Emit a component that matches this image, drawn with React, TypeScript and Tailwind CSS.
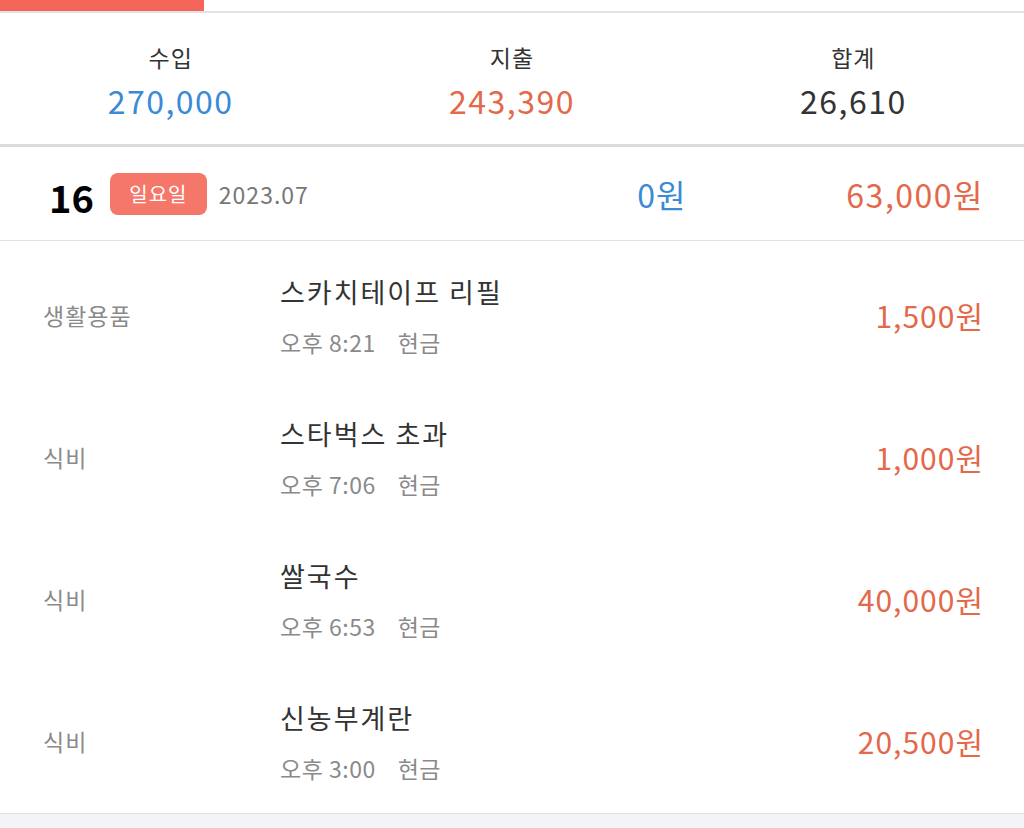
// Daily ledger view: month summary, one day header, and the day's entries.

const font = { fontFamily: '"Noto Sans CJK KR", "Noto Sans", sans-serif' };

type Entry = {
  category: string;
  title: string;
  time: string;
  method: string;
  amount: string;
};

const entries: Entry[] = [
  { category: "생활용품", title: "스카치테이프 리필", time: "오후 8:21", method: "현금", amount: "1,500원" },
  { category: "식비", title: "스타벅스 초과", time: "오후 7:06", method: "현금", amount: "1,000원" },
  { category: "식비", title: "쌀국수", time: "오후 6:53", method: "현금", amount: "40,000원" },
  { category: "식비", title: "신농부계란", time: "오후 3:00", method: "현금", amount: "20,500원" },
];

function SummaryCell({ label, value, color }: { label: string; value: string; color: string }) {
  return (
    <div className="flex flex-col items-center">
      <span className="text-[23px] leading-[30px] tracking-[1px] text-[#333]">{label}</span>
      <span className={`mt-[12px] text-[32px] leading-[32px] tracking-[1.5px] ${color}`}>{value}</span>
    </div>
  );
}

function EntryRow({ entry }: { entry: Entry }) {
  return (
    <div className="flex h-[142px] items-center pl-[43px] pr-[40px]">
      <div className="w-[237px] pb-[2px] text-[23px] tracking-[1px] text-[#8a8a8a]">{entry.category}</div>
      <div className="flex flex-1 flex-col">
        <span className="text-[27px] leading-[34px] tracking-[2px] text-[#333]">{entry.title}</span>
        <span className="mt-[18px] text-[23px] leading-[30px] tracking-[0.5px] text-[#8a8a8a]">
          {entry.time}
          <span className="ml-[22px]">{entry.method}</span>
        </span>
      </div>
      <div className="pb-[2px] text-[30px] tracking-[1px] text-[#e4684a]">{entry.amount}</div>
    </div>
  );
}

export default function App() {
  return (
    <div className="flex h-[828px] w-[1024px] flex-col bg-[#f4f4f6]" style={font}>
      <div className="bg-white">
        {/* tab indicator */}
        <div className="h-[13px] border-b-2 border-[#e3e3e3]">
          <div className="h-[11px] w-[204px] bg-[#f4665a]" />
        </div>

        {/* month totals */}
        <div className="grid grid-cols-3 border-b-[3px] border-[#dcdcdc] pt-[29px] pb-[28px]">
          <SummaryCell label="수입" value="270,000" color="text-[#3a8ad6]" />
          <SummaryCell label="지출" value="243,390" color="text-[#e4684a]" />
          <SummaryCell label="합계" value="26,610" color="text-[#333]" />
        </div>

        {/* day header */}
        <div className="flex h-[94px] items-center border-b border-[#e2e2e2] pl-[49px] pr-[40px]">
          <span className="mt-[6px] text-[38px] font-bold leading-none text-black">16</span>
          <span className="ml-[16px] flex h-[42px] w-[97px] items-center justify-center rounded-[8px] bg-[#f4776a] text-[20px] tracking-[1px] text-white">
            일요일
          </span>
          <span className="ml-[12px] mt-[2px] text-[23px] tracking-[1px] text-[#777]">2023.07</span>
          <span className="ml-auto text-[32px] tracking-[1px] text-[#3a8ad6]">0원</span>
          <span className="ml-[160px] text-[32px] tracking-[1.5px] text-[#e4684a]">63,000원</span>
        </div>

        {/* entries */}
        <div className="border-b border-[#e0e0e0] pt-[4px]">
          {entries.map((e) => (
            <EntryRow key={e.title} entry={e} />
          ))}
        </div>
      </div>
    </div>
  );
}
